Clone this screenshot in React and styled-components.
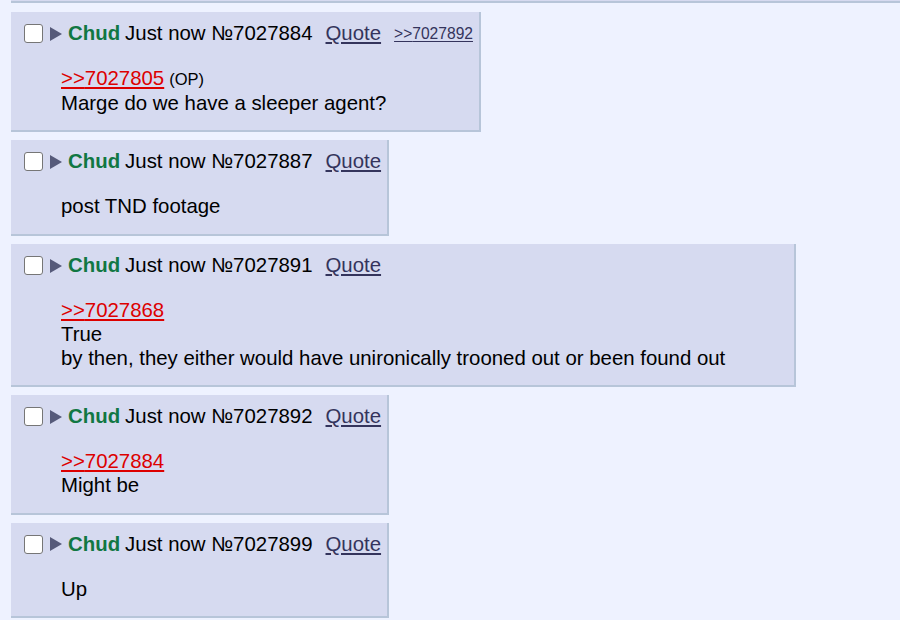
import React from 'react';
import styled, { createGlobalStyle } from 'styled-components';

const GlobalStyle = createGlobalStyle`
  html, body {
    margin: 0;
    padding: 0;
    background: #eef2ff;
    overflow: hidden;
  }
  body {
    font-family: "Liberation Sans", Arial, sans-serif;
    font-size: 20.4px;
    color: #000;
  }
`;

const Thread = styled.div`
  display: flex;
  flex-direction: column;
  align-items: flex-start;
  gap: 8px;
  padding-left: 11px;
  width: 900px;
  height: 620px;
  box-sizing: border-box;
  overflow: hidden;
`;

const ClippedPost = styled.div`
  align-self: stretch;
  height: 1px;
  margin-right: -20px;
  background: #d6daf0;
  border-bottom: 2px solid #b7c5d9;
  margin-bottom: 1px;
`;

const Post = styled.div`
  background: #d6daf0;
  border-right: 2px solid #b7c5d9;
  border-bottom: 2px solid #b7c5d9;
  padding: 10px 6px 15px 13px;
  box-sizing: border-box;
`;

const Header = styled.div`
  display: flex;
  align-items: center;
  height: 23px;
  white-space: nowrap;
`;

const Check = styled.span`
  display: inline-block;
  width: 17px;
  height: 17px;
  border: 1.5px solid #767676;
  border-radius: 3px;
  background: #fff;
  margin-right: 7px;
`;

const Arrow = styled.span`
  display: inline-block;
  width: 0;
  height: 0;
  border-top: 7px solid transparent;
  border-bottom: 7px solid transparent;
  border-left: 12px solid #565a7a;
  margin-right: 6px;
`;

const Name = styled.span`
  color: #117743;
  font-weight: bold;
  margin-right: 5px;
`;

const Info = styled.span`
  margin-right: 13px;
`;

const QuoteLink = styled.a`
  color: #34345c;
  text-decoration: underline;
  text-underline-offset: 2px;
  margin-right: ${p => (p.$last ? '0' : '13px')};
`;

const Backlink = styled.a`
  color: #34345c;
  font-size: 15.6px;
  text-decoration: underline;
  text-underline-offset: 2px;
`;

const Message = styled.div`
  margin: 22px 63px 0 37px;
  line-height: 23.7px;
`;

const RedLink = styled.a`
  color: #dd0000;
  text-decoration: underline;
  text-underline-offset: 2px;
`;

const OpTag = styled.span`
  font-size: 16.5px;
  margin-left: 5px;
`;

const posts = [
  {
    no: '7027884',
    backlinks: ['7027892'],
    quote: '7027805',
    op: true,
    lines: ['Marge do we have a sleeper agent?'],
  },
  { no: '7027887', lines: ['post TND footage'] },
  {
    no: '7027891',
    quote: '7027868',
    lines: ['True', 'by then, they either would have unironically trooned out or been found out'],
  },
  { no: '7027892', quote: '7027884', lines: ['Might be'] },
  { no: '7027899', lines: ['Up'] },
];

function PostItem({ post }) {
  const hasBacklinks = post.backlinks && post.backlinks.length > 0;
  return (
    <Post>
      <Header>
        <Check />
        <Arrow />
        <Name>Chud</Name>
        <Info>Just now №{post.no}</Info>
        <QuoteLink $last={!hasBacklinks}>Quote</QuoteLink>
        {hasBacklinks &&
          post.backlinks.map(b => <Backlink key={b}>&gt;&gt;{b}</Backlink>)}
      </Header>
      <Message>
        {post.quote && (
          <div>
            <RedLink>&gt;&gt;{post.quote}</RedLink>
            {post.op && <OpTag>(OP)</OpTag>}
          </div>
        )}
        {post.lines.map((l, i) => (
          <div key={i}>{l}</div>
        ))}
      </Message>
    </Post>
  );
}

export default function App() {
  return (
    <>
      <GlobalStyle />
      <Thread>
        <ClippedPost />
        {posts.map(p => (
          <PostItem key={p.no} post={p} />
        ))}
      </Thread>
    </>
  );
}
